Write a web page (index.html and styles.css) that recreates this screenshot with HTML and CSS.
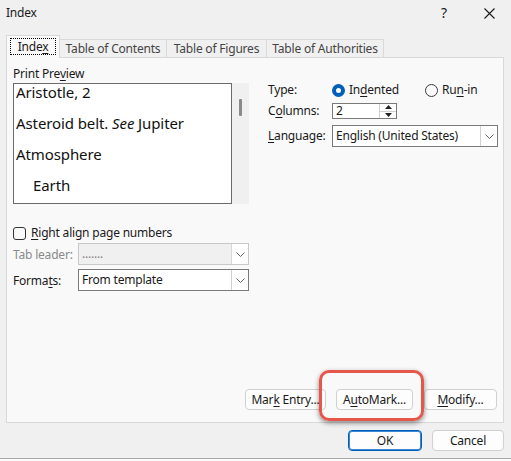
FILE: index.html
```html
<!DOCTYPE html>
<html>
<head>
<meta charset="utf-8">
<link rel="stylesheet" href="styles.css">
</head>
<body>
<div class="dialog">
  <div class="titlebar">
    <span class="title">Index</span>
    <span class="help">?</span>
    <span class="close"><svg width="11" height="11" viewBox="0 0 11 11"><path d="M0.5 0.5L10.5 10.5M10.5 0.5L0.5 10.5" stroke="#1a1a1a" stroke-width="1.1" fill="none"/></svg></span>
  </div>
  <div class="tabs">
    <div class="tab active"><span class="focus">Inde<u>x</u></span></div>
    <div class="tab t2">Table of Contents</div>
    <div class="tab t3">Table of Figures</div>
    <div class="tab t4">Table of Authorities</div>
  </div>
  <div class="panel">
    <div class="top">
      <div class="left">
        <div class="lbl">Print Pre<u>v</u>iew</div>
        <div class="preview-wrap">
          <div class="preview">
            <div class="pl">Aristotle, 2</div>
            <div class="pl">Asteroid belt. <i>See</i> Jupiter</div>
            <div class="pl">Atmosphere</div>
            <div class="pl sub">Earth</div>
          </div>
          <div class="scroll"><div class="thumb"></div></div>
        </div>
        <div class="check"><span class="box"></span><span><u>R</u>ight align page numbers</span></div>
        <div class="row first">
          <span class="rl dis">Tab leader:</span>
          <div class="select dis"><span class="val">.......</span><span class="dd"><svg width="9" height="5" viewBox="0 0 9 5"><path d="M0.5 0.5L4.5 4.5L8.5 0.5" stroke="#606060" fill="none"/></svg></span></div>
        </div>
        <div class="row">
          <span class="rl">Forma<u>t</u>s:</span>
          <div class="select"><span class="val">From template</span><span class="dd"><svg width="9" height="5" viewBox="0 0 9 5"><path d="M0.5 0.5L4.5 4.5L8.5 0.5" stroke="#606060" fill="none"/></svg></span></div>
        </div>
      </div>
      <div class="right">
        <div class="rrow type">
          <span class="rlab">Type:</span>
          <span class="radio on"></span><span class="rtext r1">In<u>d</u>ented</span>
          <span class="radio"></span><span class="rtext">Ru<u>n</u>-in</span>
        </div>
        <div class="rrow cols">
          <span class="rlab">C<u>o</u>lumns:</span>
          <div class="spin"><span class="sval">2</span><span class="sbtns"><span class="sb"><svg width="7" height="4" viewBox="0 0 7 4"><path d="M3.5 0L7 4H0Z" fill="#222"/></svg></span><span class="sb"><svg width="7" height="4" viewBox="0 0 7 4"><path d="M0 0H7L3.5 4Z" fill="#222"/></svg></span></span></div>
        </div>
        <div class="rrow lang">
          <span class="rlab"><u>L</u>anguage:</span>
          <div class="select wide"><span class="val">English (United States)</span><span class="dd"><svg width="9" height="5" viewBox="0 0 9 5"><path d="M0.5 0.5L4.5 4.5L8.5 0.5" stroke="#606060" fill="none"/></svg></span></div>
        </div>
      </div>
    </div>
    <div class="buttons">
      <div class="btn b-mark"><span>Mar<u>k</u> Entry...</span></div>
      <div class="btn b-auto"><span>A<u>u</u>toMark...</span><span class="highlight"></span></div>
      <div class="btn b-mod"><span><u>M</u>odify...</span></div>
    </div>
  </div>
  <div class="footer">
    <div class="btn ok"><span>OK</span></div>
    <div class="btn cancel"><span>Cancel</span></div>
  </div>
</div>
</body>
</html>
```
FILE: styles.css
```css
* { box-sizing: border-box; }
html, body { margin: 0; padding: 0; }
body {
  background: #fbfbfb;
  font-family: "Noto Sans", "DejaVu Sans", sans-serif;
  font-size: 12px;
  letter-spacing: -0.2px;
  color: #1a1a1a;
  width: 511px;
  height: 461px;
  overflow: hidden;
}
u { text-decoration-thickness: 1px; text-underline-offset: 2px; }
.dialog {
  width: 511px;
  height: 459px;
  background: #f0f0f0;
  border-bottom: 1px solid #a8a8a8;
  display: flex;
  flex-direction: column;
}
.titlebar {
  height: 26px;
  display: flex;
  align-items: center;
  padding-left: 6px;
}
.title { flex: 1; line-height: 16px; }
.help { width: 12px; margin-right: 34px; font-size: 14px; line-height: 16px; text-align: center; }
.close { width: 11px; height: 11px; margin-right: 16px; display: flex; }
.tabs {
  display: flex;
  align-items: flex-end;
  margin-top: 9px;
  padding-left: 6px;
  height: 22px;
  position: relative;
  z-index: 1;
}
.tab {
  height: 18px;
  border: 1px solid #d9d9d9;
  border-bottom: none;
  margin-left: -1px;
  display: flex;
  align-items: center;
  justify-content: center;
  color: #444;
  line-height: 16px;
  background: #f0f0f0;
}
.tab.active {
  height: 23px;
  width: 54px;
  margin-left: 0;
  background: #f9f9f9;
  color: #1a1a1a;
  margin-bottom: -1px;
  align-items: flex-start;
  padding-top: 2px;
  z-index: 2;
}
.focus {
  border: 1px dotted #000;
  width: 46px;
  height: 17px;
  text-align: center;
  line-height: 15px;
}
.t2 { width: 108px; }
.t3 { width: 101px; }
.t4 { width: 118px; }
.panel {
  margin: 0 7px 0 6px;
  height: 366px;
  border: 1px solid #d9d9d9;
  background: #f9f9f9;
  display: flex;
  flex-direction: column;
}
.top { display: flex; }
.left { width: 242px; padding-left: 6px; }
.lbl { margin-top: 8px; line-height: 16px; height: 16px; }
.preview-wrap { margin-top: 1px; display: flex; height: 121px; }
.preview {
  width: 220px;
  height: 121px;
  border: 1px solid #6b6b6b;
  background: #fff;
  padding: 0 0 0 2px;
  font-size: 15px;
  letter-spacing: -0.1px;
  color: #111;
}
.pl { height: 31px; line-height: 17px; }
.sub { padding-left: 17px; }
.scroll { width: 17px; background: #f0f0f0; padding-top: 16px; }
.thumb { width: 3px; height: 17px; background: #8a8a8a; margin-left: 7px; border-radius: 1px; }
.check {
  margin-top: 21px;
  display: flex;
  align-items: center;
  height: 16px;
  line-height: 16px;
}
.box {
  width: 13px; height: 13px;
  border: 1px solid #333;
  border-radius: 3px;
  background: #fafafa;
  margin-right: 5px;
}
.row { display: flex; align-items: center; margin-top: 4px; height: 22px; }
.row.first { margin-top: 2px; }
.rl { width: 65px; }
.rl.dis { color: #8a8a8a; }
.select {
  width: 171px;
  height: 22px;
  border: 1px solid #7a7a7a;
  background: #fff;
  display: flex;
  align-items: center;
}
.select .val { flex: 1; padding-left: 3px; line-height: 16px; }
.select .dd {
  width: 17px;
  height: 20px;
  border-left: 1px solid #d0d0d0;
  display: flex;
  align-items: center;
  justify-content: center;
  background: #fff;
}
.select.dis { background: #f0f0f0; border-color: #c8c8c8; }
.select.dis .val { color: #808080; }
.select.dis .dd { border-left-color: #d8d8d8; }
.right { margin-left: 19px; width: 230px; padding-top: 24px; }
.rrow { display: flex; align-items: center; }
.rlab { width: 64px; line-height: 16px; }
.type { height: 16px; }
.radio {
  width: 13px; height: 13px;
  border-radius: 50%;
  border: 1px solid #3a3a3a;
  background: #fafafa;
  margin-right: 4px;
}
.radio.on {
  border: 4px solid #005fb8;
  background: #fff;
}
.rtext { line-height: 16px; }
.r1 { margin-right: 26px; }
.cols { margin-top: 5px; height: 16px; }
.spin {
  width: 65px; height: 16px;
  border: 1px solid #7a7a7a;
  background: #fff;
  display: flex;
}
.sval { flex: 1; padding-left: 3px; line-height: 14px; }
.sbtns { width: 17px; display: flex; flex-direction: column; border-left: 1px solid #d0d0d0; }
.sb { flex: 1; display: flex; align-items: center; justify-content: center; }
.sb:first-child { border-bottom: 1px solid #d0d0d0; }
.lang { margin-top: 6px; height: 22px; }
.select.wide { width: 166px; }
.buttons {
  margin-top: auto;
  margin-bottom: 12px;
  display: flex;
  justify-content: flex-end;
  padding-right: 6px;
}
.btn {
  height: 21px;
  border: 1px solid #d0d0d0;
  border-radius: 4px;
  background: #fdfdfd;
  display: flex;
  align-items: center;
  justify-content: center;
  line-height: 16px;
  color: #1a1a1a;
}
.b-mark { width: 81px; }
.b-auto { width: 77px; margin-left: 10px; position: relative; }
.b-mod { width: 73px; margin-left: 11px; }
.highlight {
  position: absolute;
  left: -18px; top: -20px;
  width: 105px; height: 51px;
  border: 3px solid #e5574a;
  border-radius: 10px;
  box-shadow: 0 2px 5px rgba(0,0,0,0.45);
}
.footer {
  display: flex;
  justify-content: flex-end;
  padding-right: 7px;
  margin-top: 7px;
}
.ok { width: 74px; border: 1px solid #005fb8; box-shadow: inset 0 0 0 1px #3b86d0; }
.cancel { width: 72px; margin-left: 10px; }
```
